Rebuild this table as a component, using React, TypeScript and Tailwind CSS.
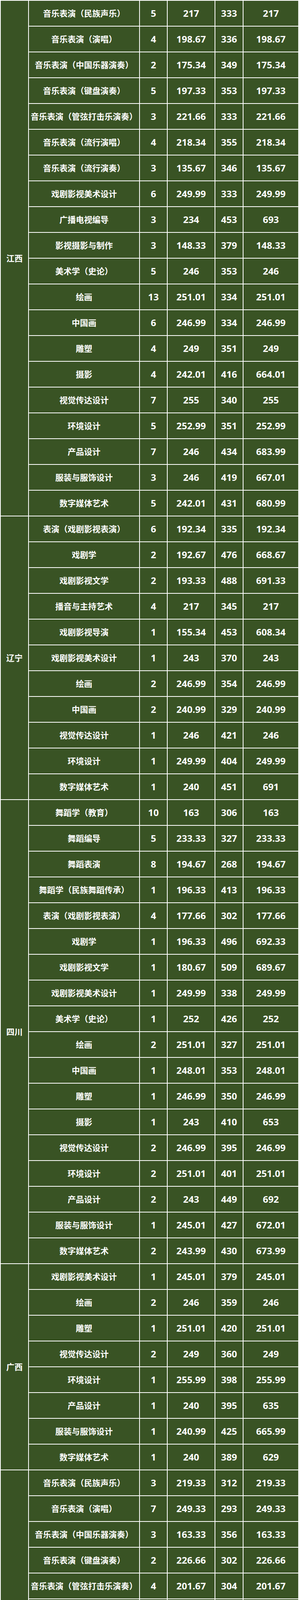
type Row = [string, string, string, string, string];

type Group = {
  province: string;
  rows: Row[];
};

const GROUPS: Group[] = [
  {
    province: "江西",
    rows: [
      ["音乐表演（民族声乐）", "5", "217", "333", "217"],
      ["音乐表演（演唱）", "4", "198.67", "336", "198.67"],
      ["音乐表演（中国乐器演奏）", "2", "175.34", "349", "175.34"],
      ["音乐表演（键盘演奏）", "5", "197.33", "353", "197.33"],
      ["音乐表演（管弦打击乐演奏）", "3", "221.66", "333", "221.66"],
      ["音乐表演（流行演唱）", "4", "218.34", "355", "218.34"],
      ["音乐表演（流行演奏）", "3", "135.67", "346", "135.67"],
      ["戏剧影视美术设计", "6", "249.99", "333", "249.99"],
      ["广播电视编导", "3", "234", "453", "693"],
      ["影视摄影与制作", "3", "148.33", "379", "148.33"],
      ["美术学（史论）", "5", "246", "353", "246"],
      ["绘画", "13", "251.01", "334", "251.01"],
      ["中国画", "6", "246.99", "334", "246.99"],
      ["雕塑", "4", "249", "351", "249"],
      ["摄影", "4", "242.01", "416", "664.01"],
      ["视觉传达设计", "7", "255", "340", "255"],
      ["环境设计", "5", "252.99", "351", "252.99"],
      ["产品设计", "7", "246", "434", "683.99"],
      ["服装与服饰设计", "3", "246", "419", "667.01"],
      ["数字媒体艺术", "5", "242.01", "431", "680.99"],
    ],
  },
  {
    province: "辽宁",
    rows: [
      ["表演（戏剧影视表演）", "6", "192.34", "335", "192.34"],
      ["戏剧学", "2", "192.67", "476", "668.67"],
      ["戏剧影视文学", "2", "193.33", "488", "691.33"],
      ["播音与主持艺术", "4", "217", "345", "217"],
      ["戏剧影视导演", "1", "155.34", "453", "608.34"],
      ["戏剧影视美术设计", "1", "243", "370", "243"],
      ["绘画", "2", "246.99", "354", "246.99"],
      ["中国画", "2", "240.99", "329", "240.99"],
      ["视觉传达设计", "1", "246", "421", "246"],
      ["环境设计", "1", "249.99", "404", "249.99"],
      ["数字媒体艺术", "1", "240", "451", "691"],
    ],
  },
  {
    province: "四川",
    rows: [
      ["舞蹈学（教育）", "10", "163", "306", "163"],
      ["舞蹈编导", "5", "233.33", "327", "233.33"],
      ["舞蹈表演", "8", "194.67", "268", "194.67"],
      ["舞蹈学（民族舞蹈传承）", "1", "196.33", "413", "196.33"],
      ["表演（戏剧影视表演）", "4", "177.66", "302", "177.66"],
      ["戏剧学", "1", "196.33", "496", "692.33"],
      ["戏剧影视文学", "1", "180.67", "509", "689.67"],
      ["戏剧影视美术设计", "1", "249.99", "338", "249.99"],
      ["美术学（史论）", "1", "252", "426", "252"],
      ["绘画", "2", "251.01", "327", "251.01"],
      ["中国画", "1", "248.01", "353", "248.01"],
      ["雕塑", "1", "246.99", "350", "246.99"],
      ["摄影", "1", "243", "410", "653"],
      ["视觉传达设计", "2", "246.99", "395", "246.99"],
      ["环境设计", "2", "251.01", "401", "251.01"],
      ["产品设计", "2", "243", "449", "692"],
      ["服装与服饰设计", "1", "245.01", "427", "672.01"],
      ["数字媒体艺术", "2", "243.99", "430", "673.99"],
    ],
  },
  {
    province: "广西",
    rows: [
      ["戏剧影视美术设计", "1", "245.01", "379", "245.01"],
      ["绘画", "2", "246", "359", "246"],
      ["雕塑", "1", "251.01", "420", "251.01"],
      ["视觉传达设计", "2", "249", "360", "249"],
      ["环境设计", "1", "255.99", "398", "255.99"],
      ["产品设计", "1", "240", "395", "635"],
      ["服装与服饰设计", "1", "240.99", "425", "665.99"],
      ["数字媒体艺术", "1", "240", "389", "629"],
    ],
  },
  {
    province: "山东",
    rows: [
      ["音乐表演（民族声乐）", "3", "219.33", "312", "219.33"],
      ["音乐表演（演唱）", "7", "249.33", "293", "249.33"],
      ["音乐表演（中国乐器演奏）", "3", "163.33", "356", "163.33"],
      ["音乐表演（键盘演奏）", "2", "226.66", "302", "226.66"],
      ["音乐表演（管弦打击乐演奏）", "4", "201.67", "304", "201.67"],
      ["音乐表演（合唱）", "7", "245.67", "305", "245.67"],
      ["作曲与作曲技术理论", "4", "168.33", "333", "168.33"],
      ["音乐表演（流行演唱）", "3", "222.34", "316", "222.34"],
      ["音乐表演（流行演奏）", "2", "136", "317", "136"],
      ["舞蹈学（教育）", "15", "161.66", "300", "161.66"],
      ["舞蹈编导", "4", "202.34", "305", "202.34"],
      ["舞蹈表演", "3", "208", "259", "208"],
      ["表演（戏剧影视表演）", "7", "205.67", "299", "205.67"],
      ["戏剧学", "2", "199.67", "389", "606"],
      ["戏剧影视文学", "3", "211.67", "454", "668.67"],
      ["播音与主持艺术", "6", "225", "336", "225"],
      ["戏剧影视导演", "2", "156.33", "377", "536"],
      ["戏剧影视美术设计", "11", "246.99", "311", "246.99"],
      ["广播电视编导", "4", "218", "430", "648"],
      ["影视摄影与制作", "4", "211.67", "313", "211.67"],
      ["录音艺术", "2", "257.33", "350", "257.33"],
      ["美术学（史论）", "3", "252", "360", "252"],
      ["绘画", "10", "249.99", "322", "249.99"],
      ["中国画", "5", "251.01", "316", "251.01"],
      ["雕塑", "9", "245.01", "301", "245.01"],
      ["摄影", "7", "245.01", "378", "624.01"],
      ["视觉传达设计", "4", "246.99", "329", "246.99"],
      ["环境设计", "4", "255", "323", "255"],
      ["产品设计", "3", "245.01", "411", "659.01"],
      ["服装与服饰设计", "1", "246", "409", "655"],
      ["数字媒体艺术", "3", "246", "407", "653"],
      ["艺术管理", "12", "-", "447", "447"],
    ],
  },
  {
    province: "山西",
    rows: [
      ["音乐表演（民族声乐）", "4", "204.33", "306", "204.33"],
      ["音乐表演（演唱）", "3", "190.67", "308", "190.67"],
      ["音乐表演（中国乐器演奏）", "1", "176.67", "375", "176.67"],
      ["音乐表演（键盘演奏）", "2", "165", "303", "165"],
      ["音乐表演（管弦打击乐演奏）", "5", "172.33", "318", "172.33"],
      ["音乐表演（合唱）", "5", "196.67", "307", "196.67"],
      ["音乐表演（流行演唱）", "1", "177.33", "327", "177.33"],
      ["音乐表演（流行演奏）", "2", "145.33", "329", "145.33"],
      ["舞蹈学（教育）", "7", "172.34", "316", "172.34"],
      ["舞蹈编导", "5", "196.34", "310", "196.34"],
      ["舞蹈表演", "2", "224.66", "302", "224.66"],
      ["舞蹈学（民族舞蹈传承）", "1", "196.67", "300", "196.67"],
      ["表演（戏剧影视表演）", "6", "179.33", "264", "179.33"],
      ["戏剧学", "3", "186.67", "363", "556.67"],
      ["戏剧影视文学", "3", "188.33", "392", "593.33"],
      ["播音与主持艺术", "8", "216.67", "337", "216.67"],
      ["戏剧影视导演", "1", "169.67", "424", "593.67"],
      ["戏剧影视美术设计", "1", "243", "330", "243"],
      ["广播电视编导", "4", "223", "417", "657.67"],
      ["影视摄影与制作", "3", "136.67", "355", "136.67"],
      ["录音艺术", "3", "245", "325", "245"],
      ["绘画", "7", "237.99", "324", "237.99"],
      ["中国画", "1", "252", "303", "252"],
      ["视觉传达设计", "2", "255.99", "294", "255.99"],
      ["环境设计", "3", "240", "321", "240"],
      ["产品设计", "3", "234", "377", "614.99"],
      ["服装与服饰设计", "1", "236.01", "382", "618.01"],
      ["数字媒体艺术", "2", "243.99", "396", "639.99"],
      ["艺术管理", "11", "-", "410", "410"],
    ],
  },
];

const cjk = "font-['Noto_Sans_CJK_SC',sans-serif]";
const num = "font-['Open_Sans','Noto_Sans_CJK_SC',sans-serif]";

function Cell({ children, zh }: { children: React.ReactNode; zh?: boolean }) {
  return (
    <div
      className={`flex items-center justify-center whitespace-nowrap bg-[#395324] text-white font-bold ${
        zh ? `${cjk} text-[21px]` : `${num} text-[24px]`
      }`}
    >
      {children}
    </div>
  );
}

function MajorRow({ row }: { row: Row }) {
  const [major, plan, culture, pro, total] = row;
  return (
    <div className="grid h-[64px] grid-cols-[282px_69px_120px_70px_1fr] gap-[2px]">
      <Cell zh>{major}</Cell>
      <Cell>{plan}</Cell>
      <Cell>{culture}</Cell>
      <Cell>{pro}</Cell>
      <Cell>{total}</Cell>
    </div>
  );
}

export default function App() {
  return (
    <div className="w-[765px] bg-white px-[2px] pt-[2px]">
      <div className="flex flex-col gap-[2px]">
        {GROUPS.map((group) => (
          <div key={group.province} className="flex gap-[2px]">
            <div
              className={`flex w-[70px] shrink-0 items-center justify-center bg-[#395324] text-[21px] font-bold text-white ${cjk}`}
            >
              {group.province}
            </div>
            <div className="flex flex-1 flex-col gap-[2px]">
              {group.rows.map((row, i) => (
                <MajorRow key={i} row={row} />
              ))}
            </div>
          </div>
        ))}
      </div>
    </div>
  );
}
